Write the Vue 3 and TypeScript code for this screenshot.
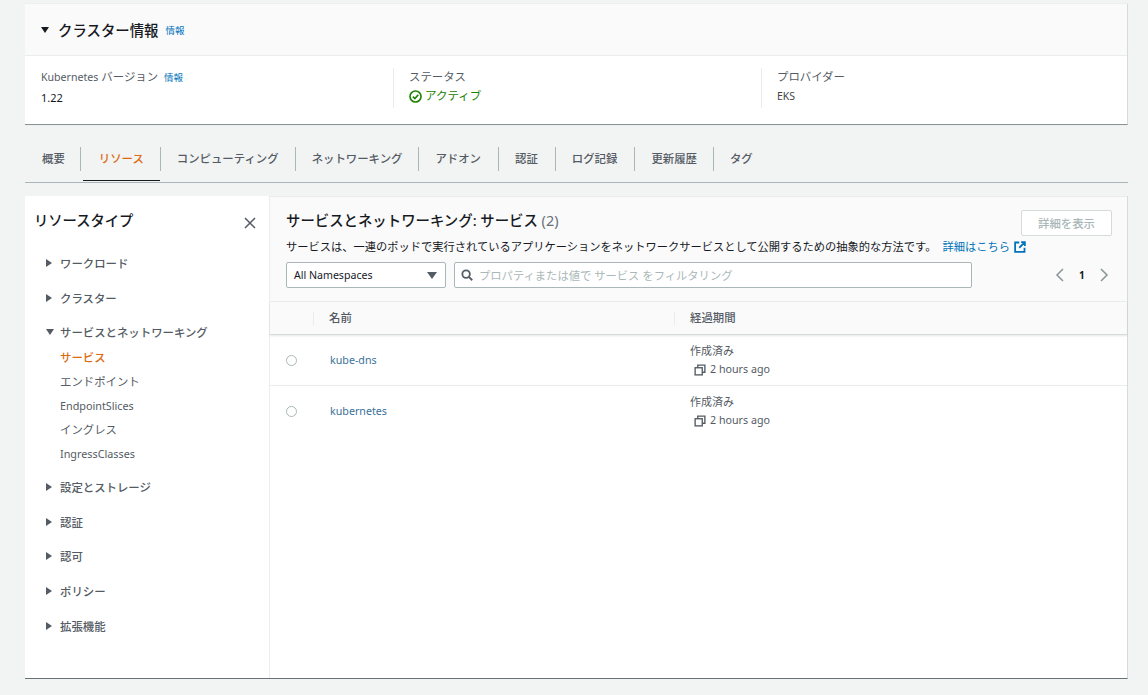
<script setup lang="ts">
interface NavItem { label: string; open?: boolean; children?: string[] }
const tabs = ['概要', 'リソース', 'コンピューティング', 'ネットワーキング', 'アドオン', '認証', 'ログ記録', '更新履歴', 'タグ']
const nav: NavItem[] = [
  { label: 'ワークロード' },
  { label: 'クラスター' },
  { label: 'サービスとネットワーキング', open: true, children: ['サービス', 'エンドポイント', 'EndpointSlices', 'イングレス', 'IngressClasses'] },
  { label: '設定とストレージ' },
  { label: '認証' },
  { label: '認可' },
  { label: 'ポリシー' },
  { label: '拡張機能' },
]
const rows = ['kube-dns', 'kubernetes']
</script>

<template>
  <div class="page">
    <section class="card">
      <header class="card-head">
        <span class="caret-down big"></span>
        <h2>クラスター情報</h2>
        <a class="info">情報</a>
      </header>
      <div class="card-body">
        <div class="col">
          <div class="label"><span class="latin">Kubernetes</span> バージョン <a class="info small">情報</a></div>
          <div class="value">1.22</div>
        </div>
        <div class="col div">
          <div class="label">ステータス</div>
          <div class="status">
            <svg width="13" height="13" viewBox="0 0 16 16" fill="none" stroke="#1d8102" stroke-width="2"><circle cx="8" cy="8" r="6.8" /><path d="M4.8 8.2 7.2 10.6 11.4 5.8" /></svg>
            アクティブ
          </div>
        </div>
        <div class="col div">
          <div class="label">プロバイダー</div>
          <div class="value eks">EKS</div>
        </div>
      </div>
    </section>

    <nav class="tabs">
      <div v-for="(t, i) in tabs" :key="t" class="tab" :class="{ active: i === 1, last: i === tabs.length - 1 }">
        <span class="tab-in">{{ t }}</span>
      </div>
    </nav>

    <section class="panel">
      <aside class="side">
        <div class="side-head">
          <h3>リソースタイプ</h3>
          <svg class="close" width="12" height="12" viewBox="0 0 12 12" stroke="#545b64" stroke-width="1.5"><path d="M1 1 11 11M11 1 1 11" /></svg>
        </div>
        <ul class="nav">
          <li v-for="n in nav" :key="n.label" class="nav-group">
            <div class="nav-row">
              <span :class="n.open ? 'caret-down' : 'caret-right'"></span>
              <span>{{ n.label }}</span>
            </div>
            <ul v-if="n.children" class="sub">
              <li v-for="(c, i) in n.children" :key="c" :class="{ current: i === 0 }">{{ c }}</li>
            </ul>
          </li>
        </ul>
      </aside>

      <div class="main">
        <div class="main-head">
          <div class="title-row">
            <h3>サービスとネットワーキング: サービス <span class="count">(2)</span></h3>
            <button class="btn" disabled>詳細を表示</button>
          </div>
          <p class="desc">
            <span>サービスは、一連のポッドで実行されているアプリケーションをネットワークサービスとして公開するための抽象的な方法です。</span><a class="more">詳細はこちら
              <svg width="12" height="12" viewBox="0 0 16 16" fill="none" stroke="#0073bb" stroke-width="2.4"><path d="M7 2H1.5V14.5H14V9M9.5 1.5H14.5V6.5M14.5 1.5 7 9" /></svg>
            </a>
          </p>
          <div class="controls">
            <div class="select">
              <span>All Namespaces</span>
              <span class="caret-down sel"></span>
            </div>
            <div class="filter">
              <svg width="12" height="12" viewBox="0 0 16 16" fill="none" stroke="#545b64" stroke-width="2.4"><circle cx="6.8" cy="6.8" r="5" /><path d="M10.5 10.5 15 15" /></svg>
              <span>プロパティまたは値で サービス をフィルタリング</span>
            </div>
            <div class="pager">
              <svg width="9" height="14" viewBox="0 0 9 14" fill="none" stroke="#879596" stroke-width="1.5"><path d="M8 1 2 7 8 13" /></svg>
              <b>1</b>
              <svg width="9" height="14" viewBox="0 0 9 14" fill="none" stroke="#879596" stroke-width="1.5"><path d="M1 1 7 7 1 13" /></svg>
            </div>
          </div>
        </div>
        <div class="thead">
          <div class="c0"></div>
          <div class="c1"><span>名前</span></div>
          <div class="c2"><span>経過期間</span></div>
        </div>
        <div v-for="r in rows" :key="r" class="row">
          <div class="c0"><span class="radio"></span></div>
          <div class="c1"><a class="name">{{ r }}</a></div>
          <div class="c2 age">
            <div class="age-label">作成済み</div>
            <div class="age-val">
              <svg width="12" height="12" viewBox="0 0 16 16" fill="none" stroke="#545b64" stroke-width="1.8"><rect x="1.5" y="5" width="9.5" height="9.5" /><path d="M5 5V1.5H14.5V11H11" /></svg>
              2 hours ago
            </div>
          </div>
        </div>
      </div>
    </section>
  </div>
</template>

<style>
html, body { margin: 0; background: #f2f3f3; }
</style>

<style scoped>
.page {
  width: 1103px;
  height: 695px;
  box-sizing: border-box;
  margin-left: 25px;
  padding-top: 4px;
  font-family: "Noto Sans", "Noto Sans CJK JP", sans-serif;
  font-size: 11.4px;
  color: #16191f;
  overflow: hidden;
}
h2, h3, p, ul { margin: 0; padding: 0; }
ul { list-style: none; }
.card {
  background: #fff;
  height: 121px;
  box-sizing: border-box;
  border-bottom: 1px solid #879596;
  border-right: 1px solid #d5dbdb;
  box-shadow: 0 0 1px #d5dbdb;
}
.card-head {
  height: 51px;
  display: flex;
  align-items: center;
  padding-left: 16px;
  background: #fafafa;
  border-bottom: 1px solid #eaeded;
}
.card-head h2 { font-size: 14.4px; font-weight: 500; margin-left: 10px; }
.info { color: #0073bb; font-size: 9.5px; margin-left: 7px; }
.info.small { margin-left: 3px; }
.latin { font-size: 10.6px; }
.card-body { display: grid; grid-template-columns: 368px 368px 1fr; padding-top: 12px; }
.col { height: 40px; padding-left: 16px; box-sizing: border-box; }
.col.div { border-left: 1px solid #eaeded; padding-left: 15px; }
.label { color: #545b64; height: 18px; line-height: 18px; }
.col .value { margin-top: 3px; line-height: 18px; font-size: 11px; color: #16191f; }
.col .eks { margin-top: 1px; color: #444; font-size: 10.5px; }
.status { display: flex; align-items: center; gap: 3px; color: #1d8102; line-height: 18px; margin-top: 1px; font-size: 11.5px; }

.tabs {
  height: 58px;
  display: flex;
  align-items: stretch;
  border-bottom: 1px solid #aab7b8;
  box-sizing: border-box;
}
.tab {
  display: flex;
  align-items: center;
  position: relative;
  box-sizing: border-box;
  padding-top: 11px;
  color: #545b64;
  font-weight: 500;
}
.tab-in {
  display: flex;
  align-items: center;
  height: 24px;
  padding: 0 16px 2px;
  box-sizing: border-box;
  border-right: 1px solid #aab7b8;
}
.tab:nth-child(n+5):nth-child(-n+7) .tab-in { padding-right: 17px; }
.tab:first-child .tab-in { padding-left: 17px; padding-right: 15px; }
.tab.last .tab-in { border-right: 0; }
.tab.active { color: #dd6b10; margin-left: 2px; }
.tab.active::after { content: ""; position: absolute; left: 0; right: 1px; bottom: 1px; height: 1px; background: #16191f; }

.panel {
  margin-top: 13px;
  height: 483px;
  display: flex;
  background: #fff;
  box-sizing: border-box;
  border-bottom: 1px solid #687078;
  border-right: 1px solid #d5dbdb;
}
.side { width: 245px; border-right: 1px solid #eaeded; flex: none; padding-left: 9px; box-sizing: border-box; }
.side-head { display: flex; justify-content: space-between; align-items: center; height: 48px; padding-right: 13px; }
.side-head h3 { font-size: 14.3px; font-weight: 500; margin-top: -2px; }
.close { margin-top: 6px; }
.nav { padding-left: 12px; margin-top: 10px; color: #545b64; }
.nav-group { margin-bottom: 16.6px; }
.nav-row { display: flex; align-items: center; height: 18px; gap: 7px; font-weight: 500; }
.caret-right { width: 0; height: 0; border-left: 6px solid #545b64; border-top: 4px solid transparent; border-bottom: 4px solid transparent; margin-right: 1px; }
.caret-down { width: 0; height: 0; border-top: 6px solid #545b64; border-left: 4px solid transparent; border-right: 4px solid transparent; margin-right: -1px; }
.caret-down.big { border-top-color: #16191f; }
.caret-down.sel { border-top: 7px solid #545b64; border-left-width: 5px; border-right-width: 5px; margin: 0; }
.sub { padding-left: 14px; margin-top: 4.4px; margin-bottom: -4px; }
.sub li { height: 24px; line-height: 24px; }
.sub li:nth-child(3), .sub li:nth-child(5) { font-size: 10.8px; }
.sub li.current { color: #dd6b10; font-weight: 500; }

.main { flex: 1; min-width: 0; }
.main-head { background: #fafafa; height: 106px; border-top: 1px solid #eaeded; border-bottom: 1px solid #eaeded; padding: 0 15px 0 16px; box-sizing: border-box; }
.title-row { display: flex; justify-content: space-between; align-items: flex-start; padding-top: 13px; height: 39px; box-sizing: border-box; }
.title-row h3 { font-size: 14.4px; font-weight: 500; line-height: 20px; margin-top: 1px; }
.count { color: #687078; font-weight: 400; }
.btn {
  width: 91px; height: 26px;
  background: #fff; border: 1px solid #d5dbdb; border-radius: 2px;
  color: #aab7b8; font: inherit; font-weight: 500;
}
.desc { font-size: 11.25px; line-height: 16px; color: #16191f; margin-top: 3px; white-space: nowrap; }
.more { color: #0073bb; margin-left: 6px; }
.more svg { vertical-align: -2px; margin-left: 1px; }
.controls { display: flex; align-items: center; margin-top: 7px; }
.select {
  width: 160px; height: 26px; box-sizing: border-box;
  display: flex; align-items: center; justify-content: space-between;
  padding: 0 8px 0 7px;
  background: #fff; border: 1px solid #aab7b8; border-radius: 2px; font-size: 10.6px; color: #16191f;
}
.filter {
  width: 518px; height: 26px; box-sizing: border-box; margin-left: 8px;
  display: flex; align-items: center; gap: 6px; padding-left: 6px;
  background: #fff; border: 1px solid #aab7b8; border-radius: 2px; color: #aab7b8; font-size: 11.3px;
}
.pager { display: flex; align-items: center; margin-left: 83px; gap: 15px; font-size: 10px; }
.thead { display: flex; height: 32px; align-items: center; background: #fafafa; border-bottom: 1px solid #d5dbdb; box-shadow: 0 1px 2px rgba(0,0,0,.1); position: relative; font-weight: 500; color: #545b64; }
.thead span { margin-top: -2px; }
.c0 { width: 43px; flex: none; }
.c1 { width: 361px; flex: none; }
.thead .c1, .thead .c2 { border-left: 1px solid #eaeded; height: 13px; display: flex; align-items: center; padding-left: 15px; box-sizing: border-box; }
.c2 { flex: 1; }
.row { display: flex; height: 51px; align-items: center; border-bottom: 1px solid #eaeded; box-sizing: border-box; }
.row:last-child { border-bottom-color: transparent; }
.row .c1 { margin-bottom: 2px; }
.radio { display: block; width: 11px; height: 11px; border: 1px solid #aab7b8; border-radius: 50%; margin-left: 16px; box-sizing: border-box; }
.name { color: #3a7299; margin-left: 17px; font-size: 10.7px; }
.age { padding-left: 16px; font-size: 11px; color: #545b64; }
.age-label { line-height: 19px; }
.age-val { display: flex; align-items: center; gap: 4px; line-height: 19px; padding-left: 4px; color: #545b64; font-size: 10.7px; }
</style>
